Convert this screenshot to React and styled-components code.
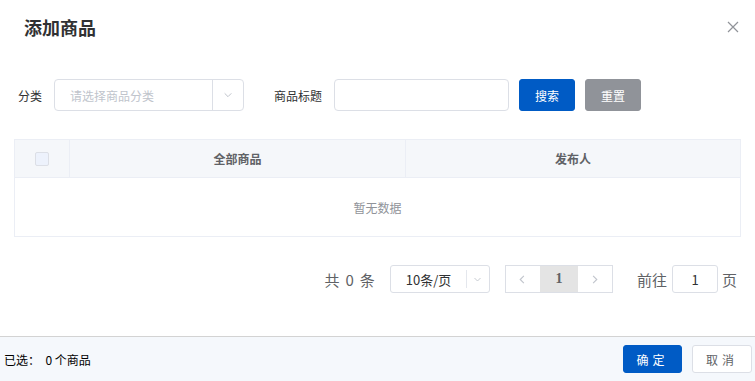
import React from 'react';
import styled, { createGlobalStyle } from 'styled-components';

const GlobalStyle = createGlobalStyle`
  html, body {
    margin: 0;
    padding: 0;
    background: #fff;
    font-family: "Noto Sans CJK SC", "Noto Sans", "Liberation Sans", sans-serif;
  }
`;

const Dialog = styled.div`
  width: 755px;
  height: 381px;
  position: relative;
  background: #fff;
  display: flex;
  flex-direction: column;
  overflow: hidden;
`;

const Header = styled.div`
  height: 55px;
  padding: 0 24px;
  display: flex;
  align-items: center;
  box-sizing: border-box;
`;

const Title = styled.div`
  font-size: 18px;
  font-weight: 700;
  color: #303133;
  margin-top: -1px;
`;

const CloseBtn = styled.div`
  position: absolute;
  top: 21px;
  right: 16px;
  width: 12px;
  height: 12px;
  display: flex;
`;

const Body = styled.div`
  flex: 1;
  padding: 24px 14px 0 14px;
  display: flex;
  flex-direction: column;
`;

const FilterRow = styled.div`
  display: flex;
  align-items: center;
  height: 32px;
  padding-left: 4px;
`;

const Label = styled.span`
  font-size: 12px;
  color: #303133;
  margin-right: ${p => p.$gap || 10}px;
`;

const SelectBox = styled.div`
  width: 190px;
  height: 32px;
  box-sizing: border-box;
  border: 1px solid #dcdfe6;
  border-radius: 4px;
  display: flex;
  align-items: center;
  margin-right: 30px;
`;

const Placeholder = styled.span`
  flex: 1;
  font-size: 12px;
  color: #c0c4cc;
  padding-left: 15px;
`;

const Arrow = styled.div`
  width: 30px;
  height: 100%;
  border-left: 1px solid #dcdfe6;
  display: flex;
  align-items: center;
  justify-content: center;
`;

const TextInput = styled.div`
  width: 175px;
  height: 32px;
  box-sizing: border-box;
  border: 1px solid #dcdfe6;
  border-radius: 4px;
  margin-right: 10px;
`;

const Button = styled.div`
  width: ${p => p.$w || 56}px;
  height: ${p => p.$h || 32}px;
  box-sizing: border-box;
  border-radius: 3px;
  display: flex;
  align-items: center;
  justify-content: center;
  font-size: 12px;
  letter-spacing: ${p => p.$ls || 0}px;
  color: ${p => (p.$kind === 'plain' ? '#606266' : '#fff')};
  background: ${p =>
    p.$kind === 'primary' ? '#005bc5' : p.$kind === 'gray' ? '#909399' : '#fff'};
  border: 1px solid ${p =>
    p.$kind === 'primary' ? '#005bc5' : p.$kind === 'gray' ? '#909399' : '#dcdfe6'};
  margin-right: ${p => p.$mr || 0}px;
`;

const Table = styled.div`
  margin-top: 28px;
  border: 1px solid #ebeef5;
  width: 727px;
  box-sizing: border-box;
`;

const HeadRow = styled.div`
  display: grid;
  grid-template-columns: 54px 336px 1fr;
  height: 37px;
  background: #f5f7fa;
  border-bottom: 1px solid #ebeef5;
`;

const HeadCell = styled.div`
  display: flex;
  align-items: center;
  justify-content: center;
  font-size: 12px;
  font-weight: 700;
  color: #606266;
  border-left: ${p => (p.$first ? 'none' : '1px solid #ebeef5')};
`;

const Checkbox = styled.div`
  width: 14px;
  height: 14px;
  box-sizing: border-box;
  border: 1px solid #dcdfe6;
  border-radius: 2px;
  background: #edf2fc;
  margin-left: -1px;
`;

const EmptyRow = styled.div`
  height: 58px;
  display: flex;
  align-items: center;
  justify-content: center;
  font-size: 12px;
  color: #909399;
`;

const Pager = styled.div`
  margin-top: 28px;
  display: flex;
  align-items: center;
  justify-content: flex-end;
  height: 28px;
  color: #606266;
`;

const PagerText = styled.span`
  font-size: 15px;
  color: #606266;
  letter-spacing: ${p => p.$ls || 0}px;
  margin-right: ${p => p.$mr || 0}px;
`;

const SizeSelect = styled.div`
  width: 100px;
  height: 28px;
  box-sizing: border-box;
  border: 1px solid #dcdfe6;
  border-radius: 3px;
  display: flex;
  align-items: center;
  margin-right: 15px;
`;

const SizeText = styled.span`
  flex: 1;
  text-align: center;
  font-size: 13px;
  color: #303133;
`;

const SizeArrow = styled.div`
  width: 22px;
  height: 18px;
  border-left: 1px solid #e4e7ed;
  display: flex;
  align-items: center;
  justify-content: center;
`;

const PageGroup = styled.div`
  display: flex;
  height: 28px;
  border: 1px solid #dcdfe6;
  box-sizing: border-box;
  margin-right: 24px;
`;

const PageItem = styled.div`
  width: ${p => p.$w}px;
  height: 100%;
  display: flex;
  align-items: center;
  justify-content: center;
  background: ${p => (p.$active ? '#e4e4e4' : '#fff')};
  font-family: "Liberation Serif", serif;
  font-weight: 700;
  font-size: 14px;
  color: #606266;
`;

const JumpInput = styled.div`
  width: 46px;
  height: 28px;
  box-sizing: border-box;
  border: 1px solid #dcdfe6;
  border-radius: 3px;
  display: flex;
  align-items: center;
  justify-content: center;
  font-size: 13px;
  color: #303133;
  margin: 0 4px 0 5px;
`;

const Footer = styled.div`
  height: 45px;
  box-sizing: border-box;
  border-top: 1px solid #d3d3d3;
  background: #f5f8fc;
  display: flex;
  align-items: center;
  justify-content: space-between;
  padding: 0 3px 0 4px;
`;

const Selected = styled.span`
  font-size: 12px;
  color: #000;
`;

const Actions = styled.div`
  display: flex;
  align-items: center;
`;

const Chevron = ({ dir = 'down', color = '#c0c4cc', size = 10 }) => {
  const d = {
    down: 'M2 4 L6 8 L10 4',
    left: 'M7.5 2 L3.5 6 L7.5 10',
    right: 'M4.5 2 L8.5 6 L4.5 10',
  }[dir];
  return (
    <svg width={size} height={size} viewBox="0 0 12 12">
      <path d={d} fill="none" stroke={color} strokeWidth="1.2" />
    </svg>
  );
};

export default function App() {
  return (
    <>
      <GlobalStyle />
      <Dialog>
        <Header>
          <Title>添加商品</Title>
        </Header>
        <CloseBtn>
          <svg width="12" height="12" viewBox="0 0 12 12">
            <path d="M1 1 L11 11 M11 1 L1 11" stroke="#909399" strokeWidth="1.2" />
          </svg>
        </CloseBtn>
        <Body>
          <FilterRow>
            <Label $gap={12}>分类</Label>
            <SelectBox>
              <Placeholder>请选择商品分类</Placeholder>
              <Arrow>
                <Chevron dir="down" />
              </Arrow>
            </SelectBox>
            <Label $gap={12}>商品标题</Label>
            <TextInput />
            <Button $kind="primary" $mr={10}>搜索</Button>
            <Button $kind="gray">重置</Button>
          </FilterRow>

          <Table>
            <HeadRow>
              <HeadCell $first>
                <Checkbox />
              </HeadCell>
              <HeadCell>全部商品</HeadCell>
              <HeadCell>发布人</HeadCell>
            </HeadRow>
            <EmptyRow>暂无数据</EmptyRow>
          </Table>

          <Pager>
            <PagerText $ls={1.3} $mr={14}>共 0 条</PagerText>
            <SizeSelect>
              <SizeText>10条/页</SizeText>
              <SizeArrow>
                <Chevron dir="down" size={9} />
              </SizeArrow>
            </SizeSelect>
            <PageGroup>
              <PageItem $w={34}>
                <Chevron dir="left" size={11} />
              </PageItem>
              <PageItem $w={38} $active>1</PageItem>
              <PageItem $w={34}>
                <Chevron dir="right" size={11} />
              </PageItem>
            </PageGroup>
            <PagerText>前往</PagerText>
            <JumpInput>1</JumpInput>
            <PagerText $mr={4}>页</PagerText>
          </Pager>
        </Body>
        <Footer>
          <Selected>已选：&nbsp;&nbsp;0 个商品</Selected>
          <Actions>
            <Button $kind="primary" $w={59} $h={28} $mr={10} $ls={4}>确定</Button>
            <Button $kind="plain" $w={60} $h={28} $ls={4}>取消</Button>
          </Actions>
        </Footer>
      </Dialog>
    </>
  );
}
